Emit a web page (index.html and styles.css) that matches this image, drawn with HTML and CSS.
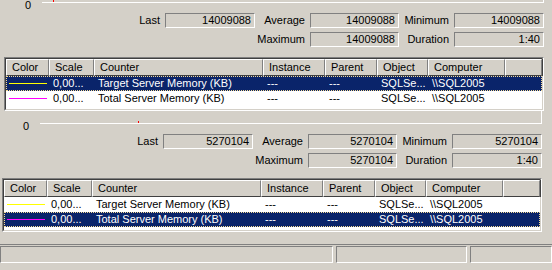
FILE: index.html
```html
<!DOCTYPE html>
<html lang="en">
<head>
	<meta charset="UTF-8">
	<title>Performance</title>
	<link rel="stylesheet" href="styles.css">
</head>
<body>
	<div class="pane pane-top">
		<div class="graph">
			<div class="axis">0</div>
			<div class="plot"><i class="tick tick-a"></i></div>
		</div>
		<div class="stats">
			<span class="label">Last</span><span class="value">14009088</span>
			<span class="label">Average</span><span class="value">14009088</span>
			<span class="label">Minimum</span><span class="value">14009088</span>
			<span class="label"></span><span class="blank"></span>
			<span class="label">Maximum</span><span class="value">14009088</span>
			<span class="label">Duration</span><span class="value">1:40</span>
		</div>
		<div class="list">
			<div class="head">
				<div>Color</div><div>Scale</div><div>Counter</div><div>Instance</div>
				<div>Parent</div><div>Object</div><div>Computer</div><div></div>
			</div>
			<div class="rows">
				<div class="row selected">
					<div><i class="swatch yellow"></i></div><div>0,00...</div><div>Target Server Memory (KB)</div><div>---</div>
					<div>---</div><div>SQLSe...</div><div>\\SQL2005</div><div></div>
				</div>
				<div class="row">
					<div><i class="swatch magenta"></i></div><div>0,00...</div><div>Total Server Memory (KB)</div><div>---</div>
					<div>---</div><div>SQLSe...</div><div>\\SQL2005</div><div></div>
				</div>
			</div>
		</div>
	</div>

	<div class="pane pane-bottom">
		<div class="graph">
			<div class="axis">0</div>
			<div class="plot"><i class="tick tick-b"></i></div>
		</div>
		<div class="stats">
			<span class="label">Last</span><span class="value">5270104</span>
			<span class="label">Average</span><span class="value">5270104</span>
			<span class="label">Minimum</span><span class="value">5270104</span>
			<span class="label"></span><span class="blank"></span>
			<span class="label">Maximum</span><span class="value">5270104</span>
			<span class="label">Duration</span><span class="value">1:40</span>
		</div>
		<div class="list">
			<div class="head">
				<div>Color</div><div>Scale</div><div>Counter</div><div>Instance</div>
				<div>Parent</div><div>Object</div><div>Computer</div><div></div>
			</div>
			<div class="rows">
				<div class="row">
					<div><i class="swatch yellow"></i></div><div>0,00...</div><div>Target Server Memory (KB)</div><div>---</div>
					<div>---</div><div>SQLSe...</div><div>\\SQL2005</div><div></div>
				</div>
				<div class="row selected">
					<div><i class="swatch magenta"></i></div><div>0,00...</div><div>Total Server Memory (KB)</div><div>---</div>
					<div>---</div><div>SQLSe...</div><div>\\SQL2005</div><div></div>
				</div>
			</div>
		</div>
	</div>

	<div class="statusbar">
		<div class="panel wide"></div>
		<div class="panel mid"></div>
		<div class="panel last"></div>
	</div>
</body>
</html>
```

FILE: styles.css
```css
*{margin: 0;padding: 0;box-sizing: border-box;}
html,body{
	width: 552px;
	height: 270px;
	overflow: hidden;
}
body{
	background-color: #d4d0c8;
	font: 11px "Liberation Sans", Arial, sans-serif;
	color: #000;
}
.pane{
	width: 540px;
}
.pane-top{
	margin-left: 4px;
}
.pane-bottom{
	margin-left: 2px;
}
/* graph strip, mostly scrolled away */
.graph{
	display: flex;
	align-items: flex-end;
}
.pane-top .graph{
	height: 3px;
}
.pane-bottom .graph{
	height: 13px;
}
.graph .axis{
	width: 38px;
	padding-right: 11px;
	text-align: right;
	line-height: 11px;
	margin-bottom: -8px;
}
.graph .plot{
	position: relative;
	flex: 1;
	height: 100%;
	border-right: 1px solid #fff;
	border-bottom: 1px solid #fff;
}
.tick{
	position: absolute;
	bottom: 0;
	width: 1px;
	height: 2px;
	background-color: #f00;
}
.tick-a{
	left: 11px;
}
.tick-b{
	left: 98px;
}
/* value boxes */
.stats{
	display: grid;
	grid-template-columns: 161px 90px 55px 89px 55px 90px;
	grid-auto-rows: 15px;
	row-gap: 4px;
	margin-top: 10px;
}
.stats .label{
	text-align: right;
	padding-right: 5px;
	line-height: 15px;
}
.stats .value{
	border: 1px solid;
	border-color: #808080 #fff #fff #808080;
	text-align: right;
	padding-right: 3px;
	line-height: 13px;
}
/* list view */
.list{
	margin-top: 10px;
	border: 1px solid;
	border-color: #808080 #fff #fff #808080;
}
.list .head,
.list .row{
	display: grid;
	grid-template-columns: 43px 45px 169px 62px 52px 51px 77px 1fr;
}
.list .head,
.list .rows{
	border-left: 1px solid #404040;
	border-right: 1px solid #d4d0c8;
}
.list .head{
	border-top: 1px solid #404040;
	height: 18px;
}
.list .head div{
	border-top: 1px solid #fff;
	border-left: 1px solid #fff;
	border-right: 1px solid #808080;
	border-bottom: 1px solid #404040;
	box-shadow: 1px 0 0 #404040;
	padding-left: 5px;
	line-height: 15px;
	white-space: nowrap;
	overflow: hidden;
}
.list .rows{
	background-color: #fff;
	height: 34px;
	border-bottom: 1px solid #d4d0c8;
}
.list .row{
	height: 15px;
	line-height: 15px;
}
.list .row div{
	padding-left: 4px;
	white-space: nowrap;
	overflow: hidden;
}
.list .row div:first-child{
	padding-left: 3px;
}
.list .row.selected{
	background-color: #0a246a;
	color: #fff;
	outline: 1px dotted #f5db95;
	outline-offset: -1px;
}
.swatch{
	display: block;
	width: 38px;
	height: 1px;
	margin-top: 7px;
}
.swatch.yellow{
	background-color: #ff0;
}
.swatch.magenta{
	background-color: #f0f;
}
/* status bar */
.statusbar{
	display: flex;
	gap: 3px;
	margin-top: 12px;
	height: 19px;
	border-top: 1px solid #808080;
	padding-top: 1px;
}
.statusbar .panel{
	height: 17px;
	border: 1px solid;
	border-color: #808080 #fff #fff #808080;
}
.statusbar .wide{
	width: 333px;
}
.statusbar .mid{
	width: 131px;
}
.statusbar .last{
	flex: 1;
}
```
